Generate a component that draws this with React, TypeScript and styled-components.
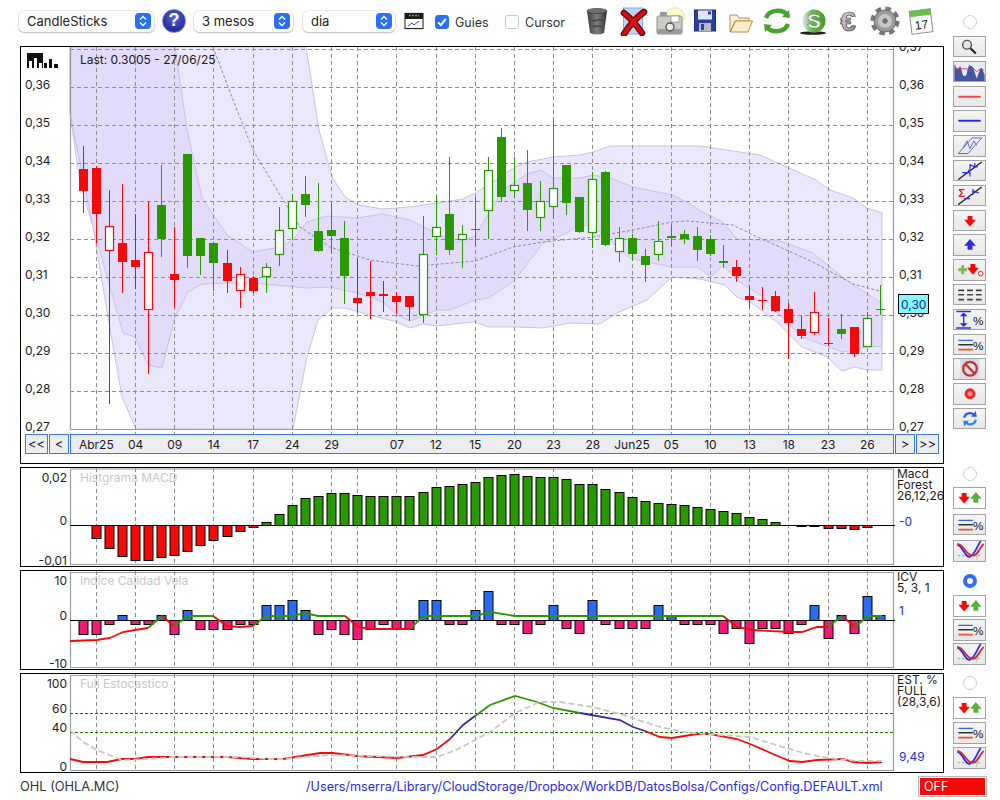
import React from 'react';
import styled, { createGlobalStyle } from 'styled-components';

type Pt = [number, number];
type Seg = { color: string; pts: Pt[] };

const GlobalStyle = createGlobalStyle`
  html, body { margin: 0; padding: 0; background: #fff; }
  body { font-family: Inter, "Liberation Sans", sans-serif; color: #1c1c1c; }
`;

// [body top, body bottom, wick top, wick bottom, kind] r/g filled, R/G hollow
type Candle = [number, number, number, number, 'r' | 'R' | 'g' | 'G'];
const candles: Candle[] = [
  [169, 191, 146, 213, 'r'], [168, 214, 166, 243, 'r'], [226, 251, 190, 404, 'R'], [243, 262, 184, 293, 'r'],
  [260, 267, 214, 289, 'r'], [252, 310, 201, 374, 'R'], [205, 239, 165, 257, 'g'], [274, 280, 227, 308, 'r'],
  [154, 256, 154, 268, 'g'], [238, 256, 238, 275, 'g'], [243, 263, 242, 291, 'g'], [263, 281, 250, 293, 'r'],
  [274, 291, 267, 308, 'R'], [278, 291, 276, 293, 'r'], [267, 277, 263, 293, 'G'], [230, 255, 207, 266, 'G'],
  [201, 229, 194, 240, 'G'], [194, 205, 176, 217, 'g'], [231, 251, 183, 252, 'g'], [230, 236, 203, 253, 'g'],
  [238, 276, 221, 304, 'g'], [298, 303, 258, 313, 'r'], [292, 296, 261, 319, 'r'], [294, 296, 281, 312, 'r'],
  [296, 302, 292, 313, 'r'], [296, 307, 296, 321, 'r'], [254, 315, 216, 323, 'G'], [227, 237, 196, 255, 'G'],
  [214, 250, 157, 255, 'g'], [234, 240, 225, 268, 'G'], [229, 229, 197, 246, 'g'], [170, 211, 157, 239, 'G'],
  [137, 197, 128, 202, 'g'], [185, 191, 157, 198, 'G'], [183, 210, 150, 231, 'g'], [201, 218, 181, 231, 'G'],
  [188, 207, 121, 219, 'G'], [165, 203, 165, 215, 'g'], [197, 232, 197, 233, 'g'], [179, 233, 172, 248, 'G'],
  [172, 245, 171, 246, 'g'], [238, 252, 227, 262, 'G'], [238, 254, 234, 261, 'g'], [256, 265, 249, 282, 'g'],
  [241, 255, 221, 261, 'G'], [236, 238, 225, 246, 'g'], [234, 239, 230, 244, 'g'], [236, 250, 227, 261, 'g'],
  [239, 254, 235, 256, 'g'], [261, 263, 245, 268, 'g'], [267, 276, 260, 282, 'r'], [296, 300, 285, 308, 'r'],
  [300, 300, 287, 310, 'r'], [296, 311, 291, 312, 'r'], [309, 323, 303, 359, 'r'], [329, 336, 316, 339, 'r'],
  [312, 333, 292, 335, 'R'], [343, 343, 318, 346, 'r'], [329, 334, 314, 339, 'g'], [327, 354, 327, 357, 'r'],
  [318, 347, 312, 347, 'G'], [309, 309, 285, 315, 'g'],
];

const xOf = (i: number) => 83.3 + 13.066 * i;
const snap = (v: number) => Math.floor(v) + 0.5;
const line = (pts: Pt[]) => pts.map((p) => p.join(',')).join(' ');

const gridIdx = [1, 4, 7, 10, 13, 16, 19, 21, 24, 27, 30, 33, 36, 39, 42, 45, 48, 51, 54, 57, 60];
const axisLabels: [number, string][] = [
  [1, 'Abr25'], [4, '04'], [7, '09'], [10, '14'], [13, '17'], [16, '24'], [19, '29'], [24, '07'], [27, '12'], [30, '15'],
  [33, '20'], [36, '23'], [39, '28'], [42, 'Jun25'], [45, '05'], [48, '10'], [51, '13'], [54, '18'], [57, '23'], [60, '26'],
];

const outerUpper: Pt[] = [
  [306, 47], [319, 130], [332, 177], [345, 197], [358, 205], [383, 209], [410, 207], [437, 203], [463, 199], [477, 192],
  [488, 185], [515, 167], [527, 162], [553, 157], [580, 155], [593, 152], [610, 146], [650, 146], [700, 146], [760, 155],
  [816, 180], [830, 190], [853, 198], [867, 208], [882, 213],
];
const outerLower: Pt[] = [
  [70, 113], [80, 183], [93, 227], [108, 317], [122, 397], [136, 429], [293, 429], [307, 357], [318, 320], [332, 308],
  [345, 308], [370, 315], [397, 322], [410, 328], [423, 324], [437, 326], [463, 323], [475, 322], [489, 327], [517, 327],
  [543, 328], [570, 323], [600, 324], [617, 313], [647, 300], [672, 277], [700, 279], [725, 285], [737, 297], [750, 302],
  [777, 322], [802, 347], [827, 357], [842, 371], [855, 367], [867, 370], [882, 370],
];
const innerUpper: Pt[] = [
  [175, 47], [187, 130], [202, 198], [227, 235], [253, 252], [280, 247], [293, 240], [307, 222], [327, 216], [357, 218],
  [383, 214], [410, 220], [437, 234], [457, 242], [475, 236], [489, 213], [503, 190], [527, 174], [541, 170], [553, 178],
  [580, 178], [593, 175], [610, 178], [633, 187], [672, 195], [687, 202], [700, 211], [723, 222], [737, 239], [780, 241],
  [813, 253], [830, 267], [853, 285], [882, 303],
];
const innerLower: Pt[] = [
  [70, 113], [93, 227], [123, 333], [135, 337], [148, 365], [162, 368], [175, 317], [188, 292], [202, 284], [226, 283],
  [253, 283], [306, 288], [330, 287], [357, 293], [383, 302], [397, 315], [410, 321], [437, 310], [450, 310], [475, 300],
  [489, 298], [515, 280], [530, 260], [543, 243], [567, 233], [577, 226], [590, 225], [600, 232], [630, 258], [647, 262],
  [672, 267], [698, 267], [711, 277], [723, 265], [737, 280], [763, 297], [777, 312], [802, 337], [843, 352], [867, 347],
  [882, 346],
];
const midLine: Pt[] = [
  [213, 47], [233, 100], [253, 150], [277, 190], [300, 227], [330, 247], [370, 260], [417, 266], [475, 261],
  [513, 247], [543, 242], [593, 237], [633, 230], [672, 222], [687, 221], [733, 225], [753, 235], [813, 262], [853, 284],
  [880, 291],
];

const macdTops: [number, number][] = [
  [1, 538], [2, 548], [3, 556], [4, 560], [5, 560], [6, 557], [7, 555], [8, 551], [9, 545], [10, 540], [11, 536], [12, 531],
  [13, 527], [14, 522], [15, 514], [16, 505], [17, 498], [18, 496], [19, 493], [20, 493], [21, 495], [22, 496], [23, 496],
  [24, 496], [25, 496], [26, 492], [27, 487], [28, 486], [29, 484], [30, 482], [31, 477], [32, 475], [33, 474], [34, 476],
  [35, 477], [36, 477], [37, 479], [38, 484], [39, 484], [40, 489], [41, 492], [42, 497], [43, 501], [44, 503], [45, 504],
  [46, 505], [47, 507], [48, 509], [49, 511], [50, 513], [51, 517], [52, 519], [53, 522], [55, 526], [56, 526], [57, 528],
  [58, 528], [59, 529], [60, 527],
];

const icvEnds = [
  634, 634, 624, 615, 624, 624, 615, 634, 610, 629, 629, 629, 624, 624, 605, 605, 600, 610, 634, 629, 634, 639, 629, 624,
  629, 629, 600, 600, 624, 624, 610, 591, 624, 624, 633, 624, 605, 628, 633, 600, 624, 628, 628, 628, 605, 615, 624, 624,
  624, 633, 628, 643, 628, 628, 633, 624, 605, 638, 615, 633, 596, 615,
];

const icvLine: Seg[] = [
  { color: '#f40a08', pts: [[70, 641], [97, 640], [110, 638], [123, 632], [135, 630], [148, 628]] },
  { color: '#2a9900', pts: [[148, 628], [162, 616]] },
  { color: '#f40a08', pts: [[162, 616], [174, 626]] },
  { color: '#2a9900', pts: [[174, 626], [188, 616], [213, 616]] },
  { color: '#f40a08', pts: [[213, 616], [227, 626], [240, 627], [253, 626]] },
  { color: '#2a9900', pts: [[253, 626], [266, 616], [292, 616], [305, 613], [318, 616], [345, 616]] },
  { color: '#f40a08', pts: [[345, 616], [358, 627], [370, 629], [410, 629]] },
  { color: '#2a9900', pts: [[410, 629], [423, 616], [475, 616], [490, 612], [515, 616], [723, 616]] },
  { color: '#f40a08', pts: [[723, 616], [737, 627], [752, 630], [790, 632], [802, 632], [817, 627], [828, 627]] },
  { color: '#2a9900', pts: [[828, 627], [842, 616]] },
  { color: '#f40a08', pts: [[842, 616], [855, 627]] },
  { color: '#2a9900', pts: [[855, 627], [868, 616], [882, 616]] },
];

const stochLine: Seg[] = [
  {
    color: '#f40a08',
    pts: [[70, 759], [83, 762], [107, 762], [122, 759], [135, 759], [148, 757], [173, 757], [200, 757], [227, 757], [253, 759],
      [283, 759], [320, 753], [333, 753], [357, 756], [397, 758], [423, 755], [437, 749], [450, 739]],
  },
  { color: '#3b2a90', pts: [[450, 739], [463, 725], [475, 716]] },
  { color: '#2a9900', pts: [[475, 716], [490, 705], [515, 696], [537, 702], [553, 708], [580, 713]] },
  { color: '#3b2a90', pts: [[580, 713], [620, 720], [633, 727], [645, 731]] },
  {
    color: '#f40a08',
    pts: [[645, 731], [660, 737], [672, 738], [697, 734], [710, 734], [737, 739], [750, 744], [780, 757], [790, 761], [802, 762],
      [817, 760], [843, 759], [853, 762], [868, 763], [882, 762]],
  },
];
const stochSignal: Pt[] = [
  [70, 730], [83, 742], [97, 750], [122, 760], [148, 759], [173, 757], [200, 757], [240, 757], [267, 759], [283, 759],
  [330, 755], [367, 756], [413, 757], [437, 757], [456, 750], [475, 740], [490, 732], [515, 713], [540, 702], [560, 702],
  [593, 707], [620, 714], [660, 727], [690, 733], [750, 737], [773, 744], [803, 753], [828, 758], [857, 761], [882, 761],
];

const Page = styled.div`
  width: 1000px;
  height: 800px;
  overflow: hidden;
  padding-left: 20px;
  box-sizing: border-box;
  display: grid;
  grid-template-columns: 924px 33px;
  grid-template-rows: 43px 418px 100px 100px 100px 24px;
  column-gap: 9px;
  row-gap: 3px;
`;

const Toolbar = styled.div`
  display: flex;
  align-items: center;
  margin-left: -1px;
  padding-bottom: 1px;
  font-size: 12.5px;
`;

const SelectBox = styled.div<{ $w: number; $ml: number }>`
  width: ${(p) => p.$w}px;
  height: 21px;
  margin-left: ${(p) => p.$ml}px;
  box-sizing: border-box;
  display: flex;
  align-items: center;
  justify-content: space-between;
  padding: 0 3px 0 8px;
  background: #fff;
  border-radius: 5px;
  box-shadow: 0 0 0 0.5px rgba(0, 0, 0, 0.14), 0 1px 2px rgba(0, 0, 0, 0.22);
  font-size: 13px;
  color: #222;
`;

const Stepper = styled.span`
  width: 16px;
  height: 16px;
  border-radius: 4px;
  background: #2b70f4;
  display: flex;
  align-items: center;
  justify-content: center;
`;

const HelpIcon = styled.div`
  width: 24px;
  height: 24px;
  margin-left: 8px;
  border-radius: 50%;
  box-sizing: border-box;
  border: 1.5px solid #7d80d8;
  background: radial-gradient(circle at 50% 35%, #5a63c8, #262c9c 70%);
  color: #fff;
  font: bold 18px/21px "Liberation Sans", sans-serif;
  text-align: center;
`;

const CheckBox = styled.span<{ $on?: boolean }>`
  width: 14px;
  height: 14px;
  box-sizing: border-box;
  margin-top: 2px;
  border-radius: 3px;
  border: 1px solid ${(p) => (p.$on ? '#2b70f4' : '#c9c9c9')};
  background: ${(p) => (p.$on ? '#2b70f4' : '#fff')};
  display: flex;
  align-items: center;
  justify-content: center;
`;

const CheckLabel = styled.span<{ $w: number }>`
  width: ${(p) => p.$w}px;
  margin-left: 6px;
  margin-top: 2px;
  color: #333;
`;

const ToolIcon = styled.svg`
  width: 36px;
  height: 30px;
  flex: none;
`;

const SmallChartIcon = styled.svg<{ $ml: number }>`
  width: 20px;
  height: 20px;
  flex: none;
  margin-left: ${(p) => p.$ml}px;
  margin-right: 11px;
`;

const Panel = styled.section`
  box-sizing: border-box;
  border: 1px solid #000;
  grid-column: 1;
  background: #fff;
  display: flex;
  flex-direction: column;
  overflow: hidden;
`;

const ChartSvg = styled.svg`
  display: block;
  flex: none;
  text {
    font-family: Inter, "Liberation Sans", sans-serif;
    font-size: 12px;
    fill: #1c1c1c;
  }
  text.title {
    fill: #c8c8c8;
  }
  text.value {
    fill: #2a2aee;
  }
`;

const AxisRow = styled.div`
  display: flex;
  gap: 1px;
  height: 20px;
  padding-left: 4px;
`;

const NavButton = styled.button<{ $w: number }>`
  width: ${(p) => p.$w}px;
  padding: 0;
  box-sizing: border-box;
  border: 1px solid #3b76ea;
  background: #ebedf1;
  font: 13px Inter, "Liberation Sans", sans-serif;
  color: #1c1c1c;
`;

const AxisTrack = styled.svg`
  width: 824px;
  height: 20px;
  flex: none;
  box-sizing: border-box;
  border: 1px solid #3b76ea;
  background: #ebedf1;
  text {
    font-family: Inter, "Liberation Sans", sans-serif;
    font-size: 12px;
    fill: #1c1c1c;
    text-anchor: middle;
  }
`;

const SideMain = styled.aside`
  grid-column: 2;
  grid-row: 1 / 3;
  display: flex;
  flex-direction: column;
  align-items: center;
  gap: 3.3px;
  padding-top: 15px;
`;

const SideGroup = styled.aside<{ $pad: number; $gap: number }>`
  grid-column: 2;
  display: flex;
  flex-direction: column;
  align-items: center;
  gap: ${(p) => p.$gap}px;
  padding-top: ${(p) => p.$pad}px;
`;

const Radio = styled.span<{ $on?: boolean; $after: number }>`
  width: 14px;
  height: 14px;
  box-sizing: border-box;
  flex: none;
  margin-bottom: ${(p) => p.$after}px;
  border-radius: 50%;
  background: #fff;
  border: ${(p) => (p.$on ? '4px solid #2b70f4' : '1px solid #cdcdcd')};
`;

const IconButton = styled.button<{ $plain?: boolean }>`
  width: 33px;
  height: 21.5px;
  flex: none;
  padding: 0;
  box-sizing: border-box;
  border: 1px solid #a3a3a3;
  background: ${(p) => (p.$plain ? '#fff' : 'linear-gradient(#f4f4f4, #e8e8e8)')};
  display: flex;
  align-items: center;
  justify-content: center;
  svg {
    width: 31px;
    height: 19.5px;
    display: block;
  }
  text {
    font-family: "Liberation Sans", sans-serif;
    font-size: 12px;
    fill: #111;
  }
`;

const StatusBar = styled.footer`
  grid-column: 1 / 3;
  display: grid;
  grid-template-columns: 286px 613px 67px;
  align-items: center;
  height: 20px;
  font-size: 12.8px;
`;

const Ticker = styled.span`
  color: #333;
`;

const ConfigPath = styled.span`
  color: #2a2aee;
  white-space: nowrap;
  font-size: 12.65px;
`;

const OffBox = styled.div`
  width: 67px;
  height: 19px;
  box-sizing: border-box;
  border: 1px solid #fff;
  outline: 1px solid #bbb;
  background: #f40a08;
  color: #fff;
  font-size: 12.5px;
  line-height: 17px;
  padding-left: 4px;
`;

const Chevrons = () => (
  <svg width="10" height="12" viewBox="0 0 10 12">
    <path d="M2 4.5 5 1.5 8 4.5M2 7.5 5 10.5 8 7.5" fill="none" stroke="#fff" strokeWidth="1.4" />
  </svg>
);

const Check = () => (
  <svg width="12" height="12" viewBox="0 0 12 12">
    <path d="M2.2 6.4 4.8 9.2 9.8 2.8" fill="none" stroke="#fff" strokeWidth="1.9" />
  </svg>
);

const Select = ({ w, ml, label }: { w: number; ml: number; label: string }) => (
  <SelectBox $w={w} $ml={ml}>
    {label}
    <Stepper>
      <Chevrons />
    </Stepper>
  </SelectBox>
);

const Trash = () => (
  <ToolIcon viewBox="0 0 36 30">
    <defs>
      <linearGradient id="trashG" x1="0" x2="1">
        <stop offset="0" stopColor="#3c3c3c" />
        <stop offset="0.5" stopColor="#808080" />
        <stop offset="1" stopColor="#303030" />
      </linearGradient>
    </defs>
    <path d="M8 5 L28 5 L25 27 Q18 30 11 27 Z" fill="url(#trashG)" />
    <ellipse cx="18" cy="5" rx="10" ry="2.6" fill="#6e6e6e" stroke="#333" strokeWidth="0.6" />
    <path d="M12 14c4 3 8-3 12 1M13 20c3 2 6-2 10 1" fill="none" stroke="#444" strokeWidth="1.4" />
  </ToolIcon>
);

const CrossIcon = () => (
  <ToolIcon viewBox="0 0 36 30">
    <rect x="8.5" y="2" width="19" height="26" fill="#bdd4f8" stroke="#7fa8ee" />
    <path d="M9 7 Q18 14 27 27 M29 6 Q18 14 9 28" fill="none" stroke="#7c0000" strokeWidth="6.5" strokeLinecap="round" />
    <path d="M9 7 Q18 14 27 27 M29 6 Q18 14 9 28" fill="none" stroke="#d41010" strokeWidth="3.6" strokeLinecap="round" />
  </ToolIcon>
);

const CameraIcon = () => (
  <ToolIcon viewBox="0 0 36 30">
    <circle cx="24" cy="11" r="9.5" fill="#fbf8cf" stroke="#efeab0" />
    <rect x="6" y="10" width="25" height="18" rx="1.5" fill="#c8ccc8" stroke="#8a8a8a" />
    <rect x="6" y="23" width="25" height="5" fill="#9a9a9a" />
    <rect x="9" y="6" width="7" height="4" fill="#9a9a9a" />
    <rect x="20" y="10" width="8" height="6" fill="#fff" stroke="#888" strokeWidth="0.7" />
    <circle cx="19" cy="21" r="4" fill="#e8e8e8" stroke="#555" strokeWidth="1.4" />
  </ToolIcon>
);

const FloppyIcon = () => (
  <ToolIcon viewBox="0 0 36 30">
    <rect x="7.5" y="4" width="21" height="21" fill="#2d3f9e" stroke="#1d2c7a" />
    <rect x="11" y="4.5" width="14" height="9" fill="#dfe7f7" />
    <rect x="21" y="5.5" width="3" height="3" fill="#2d3f9e" />
    <rect x="12" y="17" width="12" height="8" fill="#b8bcc8" />
    <rect x="14" y="18" width="3" height="6" fill="#2d3f9e" />
  </ToolIcon>
);

const FolderIcon = () => (
  <ToolIcon viewBox="0 0 36 30">
    <path d="M7 9 H14 L16 12 H26 V15 H12 L7 26 Z" fill="#fbf3df" stroke="#b98a4a" />
    <path d="M7.5 26 L12.5 15 H29.5 L25 26 Z" fill="#fdeecb" stroke="#b98a4a" />
  </ToolIcon>
);

const RefreshIcon = () => (
  <ToolIcon viewBox="0 0 36 30">
    <path d="M7 12C10 3 24 3 28 9" fill="none" stroke="#44a42e" strokeWidth="4.5" />
    <path d="M23 11 L31 12 L30 4 Z" fill="#44a42e" />
    <path d="M29 18C26 27 12 27 8 21" fill="none" stroke="#44a42e" strokeWidth="4.5" />
    <path d="M13 19 L5 18 L6 26 Z" fill="#44a42e" />
  </ToolIcon>
);

const GreenSIcon = () => (
  <ToolIcon viewBox="0 0 36 30">
    <defs>
      <linearGradient id="sphereG" x1="0" x2="1">
        <stop offset="0" stopColor="#e4e4e4" />
        <stop offset="0.4" stopColor="#6dbb52" />
        <stop offset="1" stopColor="#3f9a2c" />
      </linearGradient>
    </defs>
    <ellipse cx="18" cy="27" rx="13" ry="1.8" fill="#222" />
    <circle cx="19" cy="15" r="11.5" fill="url(#sphereG)" />
    <text x="19" y="22" textAnchor="middle" fontFamily="Liberation Sans" fontWeight="bold" fontSize="21" fill="#f4f4f4" stroke="#555" strokeWidth="0.4">
      S
    </text>
  </ToolIcon>
);

const EuroIcon = () => (
  <ToolIcon viewBox="0 0 36 30">
    <defs>
      <linearGradient id="euroG" x1="0" y1="0" x2="1" y2="1">
        <stop offset="0" stopColor="#e8e4e2" />
        <stop offset="1" stopColor="#8b7f7c" />
      </linearGradient>
    </defs>
    <text x="17" y="25" textAnchor="middle" fontFamily="Liberation Sans" fontWeight="bold" fontSize="28" fill="url(#euroG)" stroke="#3b3533" strokeWidth="0.7">
      €
    </text>
  </ToolIcon>
);

const GearIcon = () => (
  <ToolIcon viewBox="0 0 36 30">
    <circle cx="18" cy="15" r="12.6" fill="none" stroke="#777" strokeWidth="4" strokeDasharray="5.6 4.3" />
    <circle cx="18" cy="15" r="11" fill="#9b9b9b" stroke="#6a6a6a" />
    <circle cx="18" cy="15" r="7" fill="#c6c6c6" />
    <circle cx="18" cy="15" r="3.4" fill="#6f6f6f" stroke="#e2e2e2" />
  </ToolIcon>
);

const CalendarIcon = () => (
  <ToolIcon viewBox="0 0 36 30">
    <g transform="rotate(-7 18 15)">
      <rect x="7.5" y="4" width="21" height="23" fill="#fff" stroke="#888" />
      <rect x="7.5" y="4" width="21" height="6" fill="#6cbf4a" />
      <text x="18" y="23" textAnchor="middle" fontFamily="Liberation Sans" fontSize="12" fill="#222">
        17
      </text>
    </g>
  </ToolIcon>
);

const ArrowDown = ({ x, y, c = '#f40a08' }: { x: number; y: number; c?: string }) => (
  <path transform={`translate(${x} ${y})`} d="M-2.5 -5 H2.5 V-1 H6 L0 6 L-6 -1 H-2.5 Z" fill={c} />
);

const ArrowUp = ({ x, y, c = '#2a2af0' }: { x: number; y: number; c?: string }) => (
  <path transform={`translate(${x} ${y})`} d="M-2.5 5 H2.5 V1 H6 L0 -6 L-6 1 H-2.5 Z" fill={c} />
);

const Icon = ({ children, plain }: { children: React.ReactNode; plain?: boolean }) => (
  <IconButton $plain={plain}>
    <svg viewBox="0 0 31 20">{children}</svg>
  </IconButton>
);

const PercentLines = () => (
  <Icon>
    <path d="M4 5.5H19" stroke="#2a5cf0" strokeWidth="1.2" />
    <path d="M4 10H19" stroke="#222" strokeWidth="1.4" />
    <path d="M4 15H19" stroke="#f0503a" strokeWidth="1.8" />
    <text x="19" y="15.5" fontSize="14">%</text>
  </Icon>
);

const ArrowsIcon = () => (
  <Icon plain>
    <ArrowDown x={10} y={10} />
    <ArrowUp x={22} y={10} c="#5cb040" />
  </Icon>
);

const CurvesIcon = () => (
  <Icon>
    <path d="M4 15H28" stroke="#2a9900" strokeWidth="0.7" strokeDasharray="2 2" />
    <path d="M23 12V19" stroke="#888" strokeWidth="0.7" strokeDasharray="2 1" />
    <path d="M3 4C9 5 11 18 16 16S23 6 27 0" fill="none" stroke="#2a2af0" strokeWidth="1.8" />
    <path d="M3 3C9 3 12 14 18 15S26 6 30 3" fill="none" stroke="#e0202a" strokeWidth="1.8" />
  </Icon>
);

const MainSideButtons = () => (
  <>
    <Icon>
      <circle cx="13" cy="8" r="4.5" fill="#dfe6ea" stroke="#555" strokeWidth="1.4" />
      <path d="M16.5 11.5 22 17" stroke="#222" strokeWidth="2.2" />
    </Icon>
    <Icon>
      <rect x="0" y="0" width="31" height="20" fill="#e8ebf7" />
      <path d="M0 20V2L3 8L6 4L9 14L12 14L15 3L19 5L23 17L26 8L28 6L31 13V20Z" fill="#45569f" />
      <path d="M1 7H12L15 8L20 7L23 10L26 7L30 8" fill="none" stroke="#e8242a" strokeWidth="0.9" />
    </Icon>
    <Icon>
      <path d="M4 10H27" stroke="#f04848" strokeWidth="2" />
    </Icon>
    <Icon>
      <path d="M4 10H27" stroke="#2a2af0" strokeWidth="2" />
    </Icon>
    <Icon>
      <path d="M4 18L18 2H28L14 18Z M9 12 13 5 16 13 20 5 23 10" fill="none" stroke="#5454c8" strokeWidth="0.9" />
    </Icon>
    <Icon>
      <path d="M4 19L28 1" stroke="#222" strokeWidth="1.4" />
      <path d="M8 12H16L14 9M16 12V16M16 9V3M16 4L21 6H24M21 2V7" fill="none" stroke="#2a2af0" strokeWidth="1.2" />
    </Icon>
    <Icon>
      <path d="M4 19L28 1" stroke="#222" strokeWidth="1.4" />
      <text x="4" y="11" fontSize="11" fontWeight="bold" style={{ fill: '#e02020' }}>Σ</text>
      <path d="M16 13H10M19 3V9M19 5L25 7" fill="none" stroke="#2a2af0" strokeWidth="1.2" />
    </Icon>
    <Icon>
      <ArrowDown x={16} y={10} />
    </Icon>
    <Icon>
      <ArrowUp x={16} y={10} />
    </Icon>
    <Icon>
      <path d="M4 10H13M8.5 5.5V14.5" stroke="#7cb84a" strokeWidth="3" />
      <ArrowDown x={19} y={9} />
      <circle cx="27" cy="14" r="2.3" fill="#fff" stroke="#e02020" />
    </Icon>
    <Icon>
      <path d="M4 5.5H10M13 5.5H19M22 5.5H28M4 10H10M13 10H19M22 10H28M4 15H10M13 15H19M22 15H28" stroke="#444" strokeWidth="1.6" />
    </Icon>
    <Icon>
      <path d="M2 1.5H17M2 18.5H17" stroke="#2a2af0" strokeWidth="1.4" />
      <path d="M9.5 6V14" stroke="#2a2af0" strokeWidth="1.4" />
      <path d="M5.5 6.5H13.5L9.5 2.5ZM5.5 13.5H13.5L9.5 17.5Z" fill="#2a2af0" />
      <text x="19" y="15" fontSize="14">%</text>
    </Icon>
    <PercentLines />
    <Icon>
      <rect x="6" y="0" width="20" height="20" fill="#d9dbe8" />
      <circle cx="16" cy="10" r="7" fill="#e8e0e0" stroke="#b83a3a" strokeWidth="2.4" />
      <path d="M11 5 21 15" stroke="#b83a3a" strokeWidth="2.4" />
    </Icon>
    <Icon>
      <circle cx="16" cy="10" r="5.6" fill="#f2252a" />
      <circle cx="16" cy="10" r="2.6" fill="#f98a8a" />
    </Icon>
    <Icon>
      <path d="M10 9C11 4 17 3 20 6" fill="none" stroke="#2a62d8" strokeWidth="2.2" />
      <path d="M17 8 23 8 22 2Z" fill="#2a62d8" />
      <path d="M22 11C21 16 15 17 12 14" fill="none" stroke="#2a8ad8" strokeWidth="2.2" />
      <path d="M15 12 9 12 10 18Z" fill="#2a8ad8" />
    </Icon>
  </>
);

const PlotFrame = ({ top, bottom, noTop }: { top: number; bottom: number; noTop?: boolean }) => (
  <path
    d={noTop ? `M70.5 ${top}V${bottom}H893.5V${top}` : `M70.5 ${bottom}V${top}H893.5V${bottom}Z`}
    fill="none"
    stroke="#9a9a9a"
    strokeWidth="1.2"
  />
);

const VGrid = ({ top, bottom }: { top: number; bottom: number }) => (
  <>
    {gridIdx.map((i) => (
      <line key={i} x1={snap(xOf(i))} x2={snap(xOf(i))} y1={top} y2={bottom} stroke="#8e8e8e" strokeDasharray="4 3" />
    ))}
  </>
);

const MainChart = () => {
  const levels = Array.from({ length: 11 }, (_, k) => 49.5 + 38 * k);
  const prices = ['0,37', '0,36', '0,35', '0,34', '0,33', '0,32', '0,31', '0,30', '0,29', '0,28', '0,27'];
  const outerBand = [[70, 47] as Pt, ...outerUpper, ...[...outerLower].reverse()];
  const innerBand = [[70, 47] as Pt, ...innerUpper, ...[...innerLower].reverse()];
  return (
    <ChartSvg width={922} height={387} viewBox="21 47 922 387">
      <polygon points={line(outerBand)} fill="#ebe7fd" stroke="#c8c3e6" />
      <polygon points={line(innerBand)} fill="#e2dbfc" stroke="#c8c3e6" />
      <polyline points={line(midLine)} fill="none" stroke="#8c86a8" strokeWidth="1" strokeDasharray="3 2" />
      {levels.map((y) => (
        <line key={y} x1={70} x2={894} y1={y} y2={y} stroke="#8e8e8e" strokeDasharray="4 3" />
      ))}
      <VGrid top={47} bottom={434} />
      <PlotFrame top={47} bottom={429.5} noTop />
      {candles.map(([top, bottom, wickTop, wickBottom, kind], i) => {
        const x = snap(xOf(i));
        const color = kind === 'r' || kind === 'R' ? '#f40a08' : '#2a9900';
        const hollow = kind === 'R' || kind === 'G';
        return (
          <g key={i}>
            <line x1={x} x2={x} y1={wickTop} y2={wickBottom} stroke={color} />
            {top === bottom ? (
              <line x1={x - 4.5} x2={x + 4.5} y1={top + 0.5} y2={top + 0.5} stroke={color} />
            ) : hollow ? (
              <rect x={x - 4} y={top + 0.5} width={8} height={bottom - top - 1} fill="#fff" stroke={color} strokeWidth="1.2" />
            ) : (
              <rect x={x - 4.5} y={top} width={9} height={bottom - top} fill={color} />
            )}
          </g>
        );
      })}
      <g>
        <rect x="27" y="53" width="16" height="15" fill="#111" />
        <path d="M29 68V61H32V68ZM34 68V58H37V68ZM39 68V63H42V68Z" fill="#fff" />
        <path d="M44 68V63H47V68ZM49 68V59H52V68ZM54 68V64H58V68Z" fill="#111" />
      </g>
      <text x="80" y="63.5">Last: 0.3005 - 27/06/25</text>
      {levels.slice(1).map((y, k) => (
        <text key={y} x={25} y={y + 1}>
          {prices[k + 1]}
        </text>
      ))}
      {levels.map((y, k) => (
        <text key={y} x={899} y={y + 1}>
          {prices[k]}
        </text>
      ))}
      <rect x="898.5" y="294.5" width="30" height="19" fill="#80fbff" stroke="#000" />
      <text x="901" y="309" style={{ fill: '#1c2c8a' }}>0,30</text>
    </ChartSvg>
  );
};

const MacdChart = () => (
  <ChartSvg width={922} height={98} viewBox="21 468 922 98">
    <text className="title" x="80" y="482">Histgrama MACD</text>
    <VGrid top={468} bottom={566} />
    <PlotFrame top={469} bottom={564.5} />
    {macdTops.map(([i, y]) => {
      const x = snap(xOf(i));
      const up = y < 525;
      return (
        <rect
          key={i}
          x={x - 4.5}
          y={up ? y + 0.5 : 525.5}
          width={9}
          height={up ? 525 - y : y - 525}
          fill={up ? '#2a9900' : '#f40a08'}
          stroke="#000"
        />
      );
    })}
    <line x1={70} x2={895} y1={525.5} y2={525.5} stroke="#000" />
    <text x={67} y={482} textAnchor="end">0,02</text>
    <text x={67} y={525} textAnchor="end">0</text>
    <text x={67} y={565} textAnchor="end">-0,01</text>
    <text x={897} y={478}>Macd</text>
    <text x={897} y={489}>Forest</text>
    <text x={897} y={500}>26,12,26</text>
    <text className="value" x={899} y={526}>-0</text>
  </ChartSvg>
);

const IcvChart = () => (
  <ChartSvg width={922} height={98} viewBox="21 571 922 98">
    <text className="title" x="80" y="585">Indice Calidad Vela</text>
    <VGrid top={571} bottom={669} />
    <PlotFrame top={572.5} bottom={667.5} />
    {icvEnds.map((y, i) => {
      const x = snap(xOf(i));
      const up = y < 620;
      return (
        <rect
          key={i}
          x={x - 4.5}
          y={up ? y + 0.5 : 620.5}
          width={9}
          height={up ? 620 - y : y - 620}
          fill={up ? '#2b6bf3' : '#f21a74'}
          stroke="#000"
        />
      );
    })}
    <line x1={70} x2={895} y1={620.5} y2={620.5} stroke="#000" />
    {icvLine.map((s, i) => (
      <polyline key={i} points={line(s.pts)} fill="none" stroke={s.color} strokeWidth="1.8" />
    ))}
    <text x={67} y={585} textAnchor="end">10</text>
    <text x={67} y={620} textAnchor="end">0</text>
    <text x={67} y={668} textAnchor="end">-10</text>
    <text x={897} y={581}>ICV</text>
    <text x={897} y={592}>5, 3, 1</text>
    <text className="value" x={899} y={615}>1</text>
  </ChartSvg>
);

const StochChart = () => (
  <ChartSvg width={922} height={98} viewBox="21 674 922 98">
    <text className="title" x="80" y="688">Full Estocastico</text>
    <VGrid top={674} bottom={772} />
    <PlotFrame top={675.5} bottom={770.5} />
    <line x1={70} x2={895} y1={713.5} y2={713.5} stroke="#c81010" strokeDasharray="3 2" />
    <line x1={70} x2={895} y1={732.5} y2={732.5} stroke="#1a7a00" strokeDasharray="3 2" />
    {stochLine.map((s, i) => (
      <polyline key={i} points={line(s.pts)} fill="none" stroke={s.color} strokeWidth="1.8" />
    ))}
    <polyline points={line(stochSignal)} fill="none" stroke="#c8c8c8" strokeWidth="1.8" strokeDasharray="6 3" />
    <text x={67} y={688} textAnchor="end">100</text>
    <text x={67} y={713} textAnchor="end">60</text>
    <text x={67} y={732} textAnchor="end">40</text>
    <text x={67} y={771} textAnchor="end">0</text>
    <text x={897} y={684}>EST. %</text>
    <text x={897} y={695}>FULL</text>
    <text x={897} y={706}>(28,3,6)</text>
    <text className="value" x={899} y={761}>9,49</text>
  </ChartSvg>
);

const App: React.FC = () => (
  <Page>
    <GlobalStyle />
    <Toolbar>
      <Select w={135} ml={0} label="CandleSticks" />
      <HelpIcon>?</HelpIcon>
      <Select w={99} ml={8} label="3 mesos" />
      <Select w={92} ml={10} label="dia" />
      <SmallChartIcon $ml={9} viewBox="0 0 20 20">
        <rect x="0.5" y="1" width="19" height="18" fill="#e4e4e4" />
        <rect x="0.5" y="2" width="19" height="5" fill="#1a1a1a" />
        <path d="M5 4.5H15" stroke="#32c82c" strokeWidth="1.4" strokeDasharray="2 1" />
        <rect x="1" y="7.5" width="18" height="10" fill="#fff" stroke="#222" />
        <path d="M4 15L8 12L10 14L15 10" fill="none" stroke="#2a3ce0" strokeWidth="1" />
      </SmallChartIcon>
      <CheckBox $on>
        <Check />
      </CheckBox>
      <CheckLabel $w={50}>Guies</CheckLabel>
      <CheckBox />
      <CheckLabel $w={54}>Cursor</CheckLabel>
      <Trash />
      <CrossIcon />
      <CameraIcon />
      <FloppyIcon />
      <FolderIcon />
      <RefreshIcon />
      <GreenSIcon />
      <EuroIcon />
      <GearIcon />
      <CalendarIcon />
    </Toolbar>

    <SideMain>
      <Radio $after={3.7} />
      <MainSideButtons />
    </SideMain>

    <Panel>
      <MainChart />
      <AxisRow>
        <NavButton $w={23}>&lt;&lt;</NavButton>
        <NavButton $w={20}>&lt;</NavButton>
        <AxisTrack viewBox="71 435 822 18">
          {axisLabels.map(([i, label]) => (
            <text key={label + i} x={xOf(i)} y={449}>
              {label}
            </text>
          ))}
        </AxisTrack>
        <NavButton $w={20}>&gt;</NavButton>
        <NavButton $w={23}>&gt;&gt;</NavButton>
      </AxisRow>
    </Panel>

    <Panel>
      <MacdChart />
    </Panel>
    <SideGroup $pad={0} $gap={5}>
      <Radio $after={1} />
      <ArrowsIcon />
      <PercentLines />
      <CurvesIcon />
    </SideGroup>

    <Panel>
      <IcvChart />
    </Panel>
    <SideGroup $pad={4} $gap={2.5}>
      <Radio $on $after={4.5} />
      <ArrowsIcon />
      <PercentLines />
      <CurvesIcon />
    </SideGroup>

    <Panel>
      <StochChart />
    </Panel>
    <SideGroup $pad={3} $gap={3.5}>
      <Radio $after={3.5} />
      <ArrowsIcon />
      <PercentLines />
      <CurvesIcon />
    </SideGroup>

    <StatusBar>
      <Ticker>OHL (OHLA.MC)</Ticker>
      <ConfigPath>/Users/mserra/Library/CloudStorage/Dropbox/WorkDB/DatosBolsa/Configs/Config.DEFAULT.xml</ConfigPath>
      <OffBox>OFF</OffBox>
    </StatusBar>
  </Page>
);

export default App;
